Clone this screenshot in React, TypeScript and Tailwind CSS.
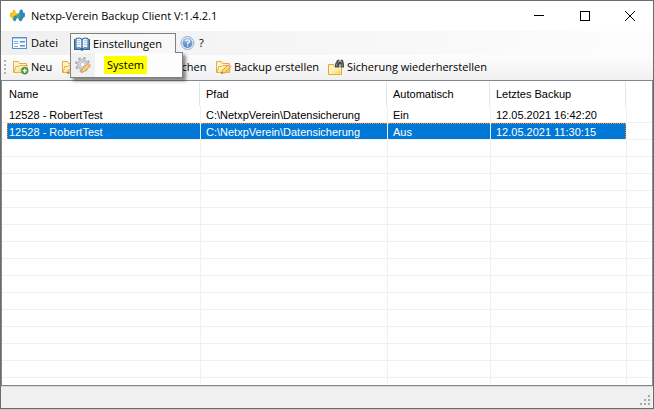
import type { ReactNode } from "react";
import { clsx } from "clsx";

interface Backup {
	name: string;
	path: string;
	automatic: string;
	last: string;
}

const backups: Backup[] = [
	{
		name: "12528 - RobertTest",
		path: "C:\\NetxpVerein\\Datensicherung",
		automatic: "Ein",
		last: "12.05.2021 16:42:20",
	},
	{
		name: "12528 - RobertTest",
		path: "C:\\NetxpVerein\\Datensicherung",
		automatic: "Aus",
		last: "12.05.2021 11:30:15",
	},
];

const columns = ["Name", "Pfad", "Automatisch", "Letztes Backup"];
const selectedIndex = 1;
const emptyRows = 14;

function Icon({ children }: { children: ReactNode }) {
	return (
		<svg
			viewBox="0 0 16 16"
			className="size-4 shrink-0"
			fill="none"
			aria-hidden="true"
		>
			{children}
		</svg>
	);
}

function SharedGradients() {
	return (
		<svg className="absolute size-0" aria-hidden="true">
			<defs>
				<linearGradient id="folder" x1="0" y1="0" x2="1" y2="1">
					<stop offset="0" stopColor="#fffbe0" />
					<stop offset="0.55" stopColor="#fde89a" />
					<stop offset="1" stopColor="#f7c62f" />
				</linearGradient>
				<linearGradient id="ball" x1="0" y1="0" x2="0" y2="1">
					<stop offset="0" stopColor="#9dbfe6" />
					<stop offset="1" stopColor="#4f80bf" />
				</linearGradient>
			</defs>
		</svg>
	);
}

function AppLogo() {
	return (
		<Icon>
			<path
				d="M4.5 1.5 6.5 2.6 6.2 4.4 8 5.2 8 8.6 6.6 10.6 5.2 12.6 3.4 11.6 2.6 9.6 0.8 8.8 1 5.2 3.2 4.4Z"
				fill="#fbb91a"
			/>
			<path d="M4.8 8 7.8 7 8 10 6.6 12.8 5 13.4 4.2 11.4Z" fill="#2b8fae" />
			<path
				d="M12 1.2 14 2.4 13.8 4.2 16 5.2 15.8 8.8 14 10 13 12.4 11 13.2 9.6 11.2 8.2 9.6 8.4 6 10.4 5 10.6 2.8Z"
				fill="#2f86bd"
			/>
			<path d="M8.4 5.8 10.6 4.8 11.6 7.4 10.2 10.8 8.2 9.4Z" fill="#3faa7c" />
			<path d="M3.4 4.6 6.6 4.6 6 7.6 3.6 8Z" fill="#fcd033" />
			<path d="M10.2 11 12.6 10.4 12.6 12.6 11 13.2Z" fill="#27987e" />
		</Icon>
	);
}

function FormIcon() {
	return (
		<Icon>
			<rect x="0.5" y="2.5" width="14" height="11" fill="#f4f9ff" stroke="#5f8dcb" />
			<path d="M1 3.5h13" stroke="#a9c8f3" />
			<path d="M2 6.5h4M2 8.5h4M2 11.5h4" stroke="#8fb0dc" />
			<path d="M8 6.5h5M8 10.5h5" stroke="#6890c8" />
			<path d="M8 7.5h5M8 11.5h5" stroke="#a5c2e8" />
		</Icon>
	);
}

function BookIcon() {
	return (
		<Icon>
			<path d="M0 3h1.5v9.5H7l1 .7 1-.7h5.5V3H16v11H9.5L8 15l-1.5-1H0Z" fill="#2f679c" />
			<path
				d="M2 2.5Q5.5 1.2 8 3.2Q10.5 1.2 14 2.5V12.2Q10.5 11 8 12.7Q5.5 11 2 12.2Z"
				fill="#eaf4fd"
				stroke="#2f5f92"
			/>
			<path d="M8 3v9.5" stroke="#244e80" strokeWidth="1.2" />
			<path
				d="M3.5 4.5h2.5M3.5 6.5h2.5M3.5 8.5h2.5M10 4.5h2.5M10 6.5h2.5M10 8.5h2.5"
				stroke="#a9c6e2"
			/>
		</Icon>
	);
}

function HelpIcon() {
	return (
		<Icon>
			<circle cx="7.5" cy="8" r="6.5" fill="#e4edf8" stroke="#93afd0" />
			<circle cx="7.5" cy="8" r="5" fill="url(#ball)" />
			<path
				d="M5.7 6.5Q5.9 4.8 7.6 4.9Q9.5 5 9.3 6.6Q9.2 7.3 8.1 7.9Q7.5 8.3 7.6 9.2"
				stroke="#fff"
				strokeWidth="1.3"
			/>
			<circle cx="7.6" cy="11" r="0.8" fill="#fff" />
		</Icon>
	);
}

function FolderShape() {
	return (
		<>
			<path
				d="M0.5 13.5V2.5H5.5L6.5 4.5H13.5V13.5Z"
				fill="#fff3c4"
				stroke="#e2ab4c"
			/>
			<path d="M1 13.5 2.8 7.5H5.5L7 6.5H14.3L13.3 13.5Z" fill="url(#folder)" stroke="#e5b04a" />
		</>
	);
}

function FolderAddIcon() {
	return (
		<Icon>
			<FolderShape />
			<circle cx="11.7" cy="11.7" r="3.5" fill="#5c9c50" stroke="#44803a" strokeWidth="0.6" />
			<path d="M11.7 9.7v4M9.7 11.7h4" stroke="#fff" strokeWidth="1.3" />
		</Icon>
	);
}

function FolderEditIcon() {
	return (
		<Icon>
			<FolderShape />
			<path d="M5.5 14.5 6.3 11.6 12 6 14.4 8.2 8.6 13.8Z" fill="#fdd878" stroke="#c98a35" strokeWidth="0.8" />
			<path d="M12 6 13 5.1 15.4 7.3 14.4 8.2Z" fill="#efb391" />
			<path d="M5.5 14.5 5.9 13 7 14.1Z" fill="#5d4c36" />
		</Icon>
	);
}

function FolderDeleteIcon() {
	return (
		<Icon>
			<FolderShape />
			<path d="M9 9 14 14M14 9 9 14" stroke="#c9302c" strokeWidth="2" />
		</Icon>
	);
}

function FolderFindIcon() {
	return (
		<Icon>
			<path
				d="M0.5 15.5V5.5H5.5L6.5 7.5H13.5V15.5Z"
				fill="#fff3c4"
				stroke="#e5a53a"
			/>
			<path d="M2 14.5V10.5H6L7 9.5H12.5V14.5Z" fill="url(#folder)" />
			<path
				d="M9 1.2 10.5 0.5 11.5 1.2V3H12.5V1.2L13.5 0.5 15 1.2 16 5V8.5H12.7V5.5H11.3V8.5H7V5Z"
				fill="#454b54"
			/>
			<path d="M8.7 4.5v3M10.2 2v2M14.2 4.5v3M13.5 2v1.5" stroke="#9ea8b5" strokeWidth="0.8" />
		</Icon>
	);
}

function GearIcon() {
	return (
		<Icon>
			<circle cx="7.5" cy="7.5" r="6.5" stroke="#a8acb1" strokeWidth="2" strokeDasharray="2.6 2.5" />
			<circle cx="7.5" cy="7.5" r="4.4" fill="#f3f4f5" stroke="#c3c6ca" strokeWidth="2.6" />
			<circle cx="7.5" cy="7.5" r="2.2" fill="#fff" stroke="#9b9fa5" strokeWidth="0.7" />
			<path d="M6 15.5 6.9 12.4 12.6 6.9 15.1 9.2 9.3 14.6Z" fill="#fdd07a" stroke="#c98f4a" strokeWidth="0.8" />
			<path d="M12.6 6.9 13.5 6 16 8.3 15.1 9.2Z" fill="#efb391" />
		</Icon>
	);
}

function TitleBar() {
	return (
		<header className="flex h-[30px] shrink-0 items-center bg-white pl-2">
			<AppLogo />
			<h1 className="ml-[6px] flex-1 whitespace-nowrap">
				Netxp-Verein Backup Client V:1.4.2.1
			</h1>
			<button type="button" aria-label="Minimieren" className="flex h-full w-[46px] items-center justify-center">
				<svg viewBox="0 0 10 10" className="size-[10px]" stroke="#000" shapeRendering="crispEdges">
					<path d="M0 4.5h10" />
				</svg>
			</button>
			<button type="button" aria-label="Maximieren" className="flex h-full w-[45px] items-center justify-center">
				<svg viewBox="0 0 10 10" className="size-[10px]" stroke="#000" fill="none" shapeRendering="crispEdges">
					<rect x="0.5" y="0.5" width="9" height="9" />
				</svg>
			</button>
			<button type="button" aria-label="Schließen" className="flex h-full w-[46px] items-center justify-center">
				<svg viewBox="0 0 10 10" className="size-[10px]" stroke="#000">
					<path d="M0 0 10 10M10 0 0 10" />
				</svg>
			</button>
		</header>
	);
}

function MenuBar() {
	return (
		<nav className="flex h-6 shrink-0 items-center bg-linear-to-r from-[#f0f0f0] to-[#fdfdfd] pl-[11px]">
			<button type="button" className="flex w-[58px] items-center gap-[3px]">
				<FormIcon />
				Datei
			</button>
			<div className="relative w-[110px]">
				<button
					type="button"
					aria-expanded="true"
					className="relative z-20 flex h-5 w-[106px] items-center gap-[3px] border border-b-0 border-[#808080] bg-[#f8f8f8] pl-[3px]"
				>
					<BookIcon />
					Einstellungen
				</button>
				<div
					role="menu"
					className="absolute top-[19px] left-0 z-10 flex h-[26px] w-[113px] border border-[#808080] bg-[#fdfdfd] shadow-[3px_3px_3px_rgba(0,0,0,0.45)]"
				>
					<span className="flex w-6 items-center justify-center bg-[#f0f0f0]">
						<GearIcon />
					</span>
					<button type="button" role="menuitem" className="my-[3px] ml-[9px] w-[43px] bg-[#ffff00] text-center leading-[18px]">
						System
					</button>
				</div>
			</div>
			<button type="button" className="flex items-center gap-[3px]">
				<HelpIcon />
				?
			</button>
		</nav>
	);
}

function ToolBar() {
	return (
		<div
			role="toolbar"
			className="flex h-[25px] shrink-0 items-center bg-linear-to-b from-[#fdfdfd] to-[#f0f0f0] pb-[2px] pl-[3px] whitespace-nowrap"
		>
			<span className="mr-[7px] grid gap-[2px]" aria-hidden="true">
				{Array.from({ length: 4 }).map((_, i) => (
					<span key={i} className="size-[2px] bg-[#b4b4b4]" />
				))}
			</span>
			<button type="button" className="flex w-[49px] items-center gap-[2px]">
				<FolderAddIcon />
				Neu
			</button>
			<button type="button" aria-label="Bearbeiten" className="flex w-[84px] items-center">
				<FolderEditIcon />
			</button>
			<button type="button" className="flex w-[70px] items-center gap-[2px]">
				<FolderDeleteIcon />
				Löschen
			</button>
			<button type="button" className="flex w-[112px] items-center gap-[2px]">
				<FolderEditIcon />
				Backup erstellen
			</button>
			<button type="button" className="flex items-center gap-[3px]">
				<FolderFindIcon />
				Sicherung wiederherstellen
			</button>
		</div>
	);
}

function BackupRow({ backup, selected }: { backup: Backup; selected: boolean }) {
	const cells = [backup.name, backup.path, backup.automatic, backup.last];

	return (
		<tr aria-selected={selected} className="h-[17px]">
			{cells.map((cell, i) => (
				<td
					key={i}
					className={clsx(
						"border-r border-b border-[#f0f0f0] p-0",
						i === 0 && "pl-[5px]",
					)}
				>
					<div
						className={clsx(
							"h-4 leading-4",
							i > 0 && "pl-[5px]",
							i === 0 && (selected ? "border-l pl-px" : "pl-[2px]"),
							selected
								? "border-t border-dotted border-[#ff8728] bg-[#0078d7] text-white"
								: "pt-px",
							selected && i === cells.length - 1 && "border-r",
						)}
					>
						{cell}
					</div>
				</td>
			))}
			<td className="border-b border-[#f0f0f0] p-0" />
		</tr>
	);
}

function BackupList() {
	return (
		<main className="min-h-0 flex-1 overflow-hidden border border-[#828790] bg-white font-['Liberation_Sans',Arial,sans-serif] text-[11px]">
			<table className="w-full table-fixed border-separate border-spacing-0 text-left whitespace-nowrap">
				<colgroup>
					<col className="w-[199px]" />
					<col className="w-[187px]" />
					<col className="w-[103px]" />
					<col className="w-[136px]" />
					<col />
				</colgroup>
				<thead>
					<tr className="h-[25px]">
						{columns.map((column, i) => (
							<th key={column} scope="col" className="p-0 font-normal">
								<div
									className={clsx(
										"mr-px h-6 border-r border-[#e5e5e5] leading-6",
										i === 0 ? "pl-[7px]" : "pl-[5px]",
									)}
								>
									{column}
								</div>
							</th>
						))}
						<th className="p-0" />
					</tr>
				</thead>
				<tbody>
					{backups.map((backup, i) => (
						<BackupRow key={i} backup={backup} selected={i === selectedIndex} />
					))}
					{Array.from({ length: emptyRows }).map((_, i) => (
						<tr key={`empty-${i}`} className="h-[17px]">
							{columns.map((column) => (
								<td key={column} className="border-r border-b border-[#f0f0f0] p-0" />
							))}
							<td className="border-b border-[#f0f0f0] p-0" />
						</tr>
					))}
					<tr className="h-[6px]">
						{columns.map((column) => (
							<td key={column} className="border-r border-[#f0f0f0] p-0" />
						))}
						<td className="p-0" />
					</tr>
				</tbody>
			</table>
		</main>
	);
}

function StatusBar() {
	return (
		<footer className="flex h-[22px] shrink-0 items-end justify-end border-t border-[#d7d7d7] bg-[#f0f0f0] pr-[3px] pb-[3px]">
			<svg viewBox="0 0 10 10" className="size-[10px]" fill="#a6a6a6" shapeRendering="crispEdges" aria-hidden="true">
				<path d="M8 0h2v2H8ZM4 4h2v2H4ZM8 4h2v2H8ZM0 8h2v2H0ZM4 8h2v2H4ZM8 8h2v2H8Z" />
			</svg>
		</footer>
	);
}

export default function App() {
	return (
		<div className="h-screen bg-[#c8c8c8] pb-px">
			<div className="flex h-full flex-col border border-[#6b6c6e] bg-white font-['Open_Sans','Segoe_UI',sans-serif] text-[11px] leading-4 text-black">
				<SharedGradients />
				<TitleBar />
				<MenuBar />
				<ToolBar />
				<BackupList />
				<StatusBar />
			</div>
		</div>
	);
}
